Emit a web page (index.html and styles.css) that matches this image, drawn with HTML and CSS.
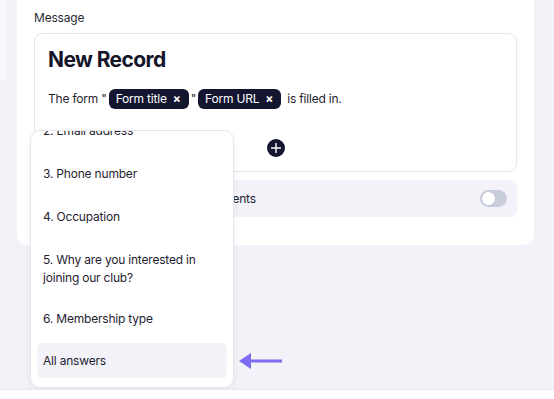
FILE: index.html
```html
<!DOCTYPE html>
<html>
<head>
<meta charset="utf-8">
<link rel="stylesheet" href="styles.css">
</head>
<body>
<div class="page">
  <div class="strip"></div>
  <div class="card">
    <div class="label">Message</div>
    <div class="msgbox">
      <div class="title">New Record</div>
      <div class="line">
        <span>The form "</span>
        <span class="chip">Form title <span class="x">×</span></span>
        <span>"</span>
        <span class="chip">Form URL <span class="x">×</span></span>
        <span>is filled in.</span>
      </div>
      <div class="plus">
        <svg width="18" height="18" viewBox="0 0 18 18"><circle cx="9" cy="9" r="9" fill="#14152f"/><path d="M9 4.5v9M4.5 9h9" stroke="#fff" stroke-width="1.4" stroke-linecap="round"/></svg>
      </div>
    </div>
    <div class="togglerow">
      <span class="tlabel">Post responses in the comments</span>
      <span class="toggle"><span class="knob"></span></span>
    </div>
  </div>

  <div class="dropdown">
    <div class="list">
      <div class="item">2. Email address</div>
      <div class="item">3. Phone number</div>
      <div class="item">4. Occupation</div>
      <div class="item">5. Why are you interested in joining our club?</div>
      <div class="item six">6. Membership type</div>
      <div class="item active">All answers</div>
    </div>
  </div>

  <svg class="arrow" width="44" height="18" viewBox="0 0 44 18">
    <path d="M0 9 L12 1 L12 17 Z" fill="#7b6cf0"/>
    <rect x="11" y="7.5" width="32" height="3" fill="#7b6cf0"/>
  </svg>
</div>
<div class="footer"></div>
</body>
</html>
```

FILE: styles.css
```css
* { box-sizing: border-box; }
html, body { margin: 0; padding: 0; }
body {
  font-family: Inter, "Noto Sans", sans-serif;
  color: #1f2230;
  background: #ffffff;
  letter-spacing: -0.2px;
}
.page {
  position: relative;
  height: 390px;
  background: #f2f2f8;
  border-bottom: 1px solid #e7e8ef;
  display: flex;
  align-items: flex-start;
  overflow: hidden;
}
.strip {
  width: 5px;
  height: 80px;
  background: #f8f8fb;
}
.card {
  margin-left: 12px;
  width: 517px;
  height: 245px;
  background: #ffffff;
  border-radius: 0 0 10px 10px;
  padding: 10px 17px 0 17px;
}
.label {
  font-size: 12px;
  line-height: 16px;
  color: #2a2c38;
}
.msgbox {
  margin-top: 7px;
  height: 139px;
  border: 1px solid #e4e6ec;
  border-radius: 8px;
  padding: 13px 13px 0 13px;
  display: flex;
  flex-direction: column;
}
.title {
  font-size: 21px;
  line-height: 26px;
  font-weight: 700;
  color: #14152a;
  letter-spacing: -0.6px;
}
.line {
  margin-top: 16px;
  display: flex;
  align-items: center;
  gap: 2px;
  font-size: 12px;
  line-height: 20px;
  color: #1f2230;
}
.line > span:last-child { margin-left: 4px; }
.chip {
  display: inline-flex;
  align-items: center;
  height: 20px;
  padding: 0 8px 0 7px;
  background: #14152f;
  color: #ffffff;
  border-radius: 6px;
  font-size: 12px;
}
.chip .x {
  margin-left: 6px;
  font-weight: 700;
  font-size: 12px;
}
.plus {
  margin-top: 30px;
  display: flex;
  justify-content: center;
  height: 18px;
}
.plus svg { display: block; }
.togglerow {
  margin-top: 8px;
  height: 37px;
  background: #f2f2f8;
  border-radius: 6px;
  display: flex;
  align-items: center;
  justify-content: space-between;
  padding: 0 10px 0 43px;
  font-size: 12px;
  color: #1f2230;
}
.toggle {
  width: 27px;
  height: 17px;
  border-radius: 9px;
  background: #c8cddb;
  display: flex;
  align-items: center;
  padding-left: 2px;
}
.knob {
  width: 13px;
  height: 13px;
  border-radius: 50%;
  background: #ffffff;
}
.dropdown {
  position: absolute;
  left: 30px;
  top: 130px;
  width: 204px;
  height: 258px;
  background: #ffffff;
  border: 1px solid #e6e7ee;
  border-radius: 10px;
  box-shadow: 0 2px 6px rgba(20, 21, 47, 0.06);
  overflow: hidden;
}
.list {
  margin-top: -22px;
  padding: 0 6px;
}
.item {
  font-size: 12px;
  line-height: 18px;
  padding: 12.5px 6px;
  color: #1f2230;
}
.item.six { margin-top: -2px; }
.item.active {
  margin-top: 3px;
  background: #f2f2f8;
  border-radius: 6px;
  padding: 8.5px 6px;
}
.arrow {
  position: absolute;
  left: 239px;
  top: 352px;
}
.footer {
  height: 9px;
  background: #ffffff;
}
```
